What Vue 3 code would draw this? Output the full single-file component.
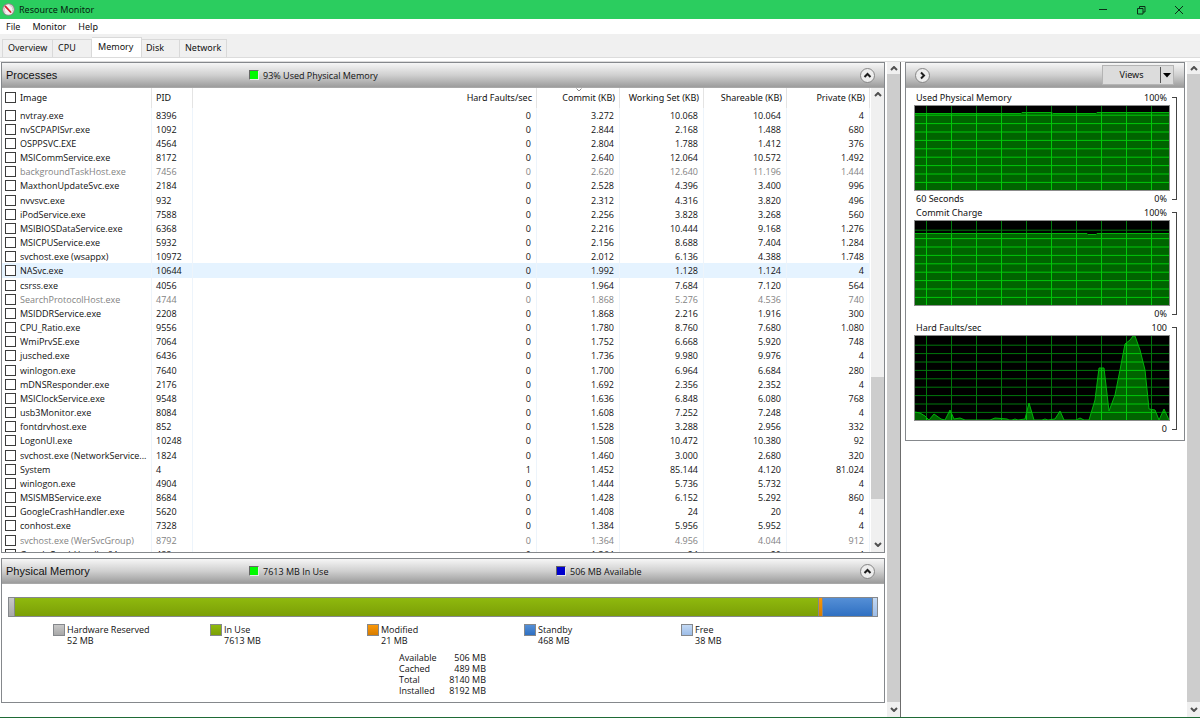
<script setup>
const tabs = ['Overview', 'CPU', 'Memory', 'Disk', 'Network']

const columns = ['Image', 'PID', 'Hard Faults/sec', 'Commit (KB)', 'Working Set (KB)', 'Shareable (KB)', 'Private (KB)']

const processes = [
  ['nvtray.exe', '8396', '0', '3.272', '10.068', '10.064', '4'],
  ['nvSCPAPISvr.exe', '1092', '0', '2.844', '2.168', '1.488', '680'],
  ['OSPPSVC.EXE', '4564', '0', '2.804', '1.788', '1.412', '376'],
  ['MSICommService.exe', '8172', '0', '2.640', '12.064', '10.572', '1.492'],
  ['backgroundTaskHost.exe', '7456', '0', '2.620', '12.640', '11.196', '1.444', 'idle'],
  ['MaxthonUpdateSvc.exe', '2184', '0', '2.528', '4.396', '3.400', '996'],
  ['nvvsvc.exe', '932', '0', '2.312', '4.316', '3.820', '496'],
  ['iPodService.exe', '7588', '0', '2.256', '3.828', '3.268', '560'],
  ['MSIBIOSDataService.exe', '6368', '0', '2.216', '10.444', '9.168', '1.276'],
  ['MSICPUService.exe', '5932', '0', '2.156', '8.688', '7.404', '1.284'],
  ['svchost.exe (wsappx)', '10972', '0', '2.012', '6.136', '4.388', '1.748'],
  ['NASvc.exe', '10644', '0', '1.992', '1.128', '1.124', '4', 'hover'],
  ['csrss.exe', '4056', '0', '1.964', '7.684', '7.120', '564'],
  ['SearchProtocolHost.exe', '4744', '0', '1.868', '5.276', '4.536', '740', 'idle'],
  ['MSIDDRService.exe', '2208', '0', '1.868', '2.216', '1.916', '300'],
  ['CPU_Ratio.exe', '9556', '0', '1.780', '8.760', '7.680', '1.080'],
  ['WmiPrvSE.exe', '7064', '0', '1.752', '6.668', '5.920', '748'],
  ['jusched.exe', '6436', '0', '1.736', '9.980', '9.976', '4'],
  ['winlogon.exe', '7640', '0', '1.700', '6.964', '6.684', '280'],
  ['mDNSResponder.exe', '2176', '0', '1.692', '2.356', '2.352', '4'],
  ['MSIClockService.exe', '9548', '0', '1.636', '6.848', '6.080', '768'],
  ['usb3Monitor.exe', '8084', '0', '1.608', '7.252', '7.248', '4'],
  ['fontdrvhost.exe', '852', '0', '1.528', '3.288', '2.956', '332'],
  ['LogonUI.exe', '10248', '0', '1.508', '10.472', '10.380', '92'],
  ['svchost.exe (NetworkService...', '1824', '0', '1.460', '3.000', '2.680', '320'],
  ['System', '4', '1', '1.452', '85.144', '4.120', '81.024'],
  ['winlogon.exe', '4904', '0', '1.444', '5.736', '5.732', '4'],
  ['MSISMBService.exe', '8684', '0', '1.428', '6.152', '5.292', '860'],
  ['GoogleCrashHandler.exe', '5620', '0', '1.408', '24', '20', '4'],
  ['conhost.exe', '7328', '0', '1.384', '5.956', '5.952', '4'],
  ['svchost.exe (WerSvcGroup)', '8792', '0', '1.364', '4.956', '4.044', '912', 'idle'],
  ['GoogleCrashHandler64.exe', '488', '0', '1.364', '24', '20', '4'],
].map((r) => ({ cells: r.slice(0, 7), state: r[7] || '' }))

const memory = [
  { name: 'Hardware Reserved', mb: 52, kind: 'reserved' },
  { name: 'In Use', mb: 7613, kind: 'in-use' },
  { name: 'Modified', mb: 21, kind: 'modified' },
  { name: 'Standby', mb: 468, kind: 'standby' },
  { name: 'Free', mb: 38, kind: 'free' },
]

const totals = [['Available', 506], ['Cached', 489], ['Total', 8140], ['Installed', 8192]]

const gridX = Array.from({ length: 10 }, (_, i) => 11.5 + i * 25)
const gridY = Array.from({ length: 9 }, (_, i) => 9.2 + i * 8.4)

const graphs = [
  {
    id: 'used', title: 'Used Physical Memory', max: '100%', min: '0%', span: '60 Seconds',
    points: '0,7.5 106,7.5 107,6.5 137,6.5 138,7.5 181,7.5 182,6.5 254,6.5',
  },
  {
    id: 'commit', title: 'Commit Charge', max: '100%', min: '0%', span: '',
    points: '0,12.5 172,12.5 173,13.5 181,13.5 182,12.5 254,12.5',
  },
  {
    id: 'faults', title: 'Hard Faults/sec', max: '100', min: '0', span: '',
    points: '0,76 5,77 10,80 14,84 19,78 26,83 30,84 35,74 39,83 45,82 50,84 75,84 80,82 92,83 94,84 97,84 100,83 103,84 110,83 114,67 119,84 127,84 130,83 133,84 140,83 145,75 149,84 161,84 165,82 169,84 174,84 180,64 184,32 189,32 194,75 200,59 205,34 210,8 215,4 218,0 220,0 225,14 230,34 234,73 240,74 244,84 249,73 254,84',
  },
]
</script>

<template>
  <div class="window">
    <header class="titlebar">
      <svg class="logo" viewBox="0 0 13 13" aria-hidden="true">
        <circle cx="6.5" cy="6.5" r="6.2" fill="#8f8a8c" />
        <circle cx="6.5" cy="6.5" r="5.2" fill="#f6f1f1" />
        <path d="M3.400 9.600A4.400 4.400 0 0 1 2.800 4.400M7.500 2.300A4.300 4.300 0 0 1 10.400 8.400" fill="none" stroke="#cfc6c6" />
        <path d="M3.400 3.400L8.600 9" stroke="#d3222c" stroke-width="1.8" stroke-linecap="round" />
      </svg>
      <h1>Resource Monitor</h1>
      <div class="controls">
        <button aria-label="Minimize"><svg viewBox="0 0 10 10"><path d="M1 4.500h8" /></svg></button>
        <button aria-label="Restore"><svg viewBox="0 0 10 10"><path d="M1.5 3.5h5.500v5.500h-5.500zM3.500 3.500v-2h5.500v5.500h-2" /></svg></button>
        <button aria-label="Close"><svg viewBox="0 0 10 10"><path d="M1 1l8 8M9 1l-8 8" /></svg></button>
      </div>
    </header>

    <nav class="menu">
      <button>File</button>
      <button>Monitor</button>
      <button>Help</button>
    </nav>

    <div class="tabs" role="tablist">
      <button v-for="t in tabs" :key="t" role="tab" :class="['tab', t.toLowerCase()]" :aria-selected="t === 'Memory'">{{ t }}</button>
    </div>
    <div class="tab-edge"></div>

    <div class="body">
      <main class="left">
        <section class="panel processes">
          <div class="panel-head">
            <h2>Processes</h2>
            <p class="stat"><i class="lamp green"></i>93% Used Physical Memory</p>
            <button class="round" aria-label="Collapse processes"><svg viewBox="0 0 15 15"><circle cx="7.5" cy="7.5" r="7" /><path d="M4.500 9l3-3 3 3" /></svg></button>
          </div>
          <div class="list">
            <div class="table-wrap">
              <table>
                <colgroup>
                  <col class="c-image"><col class="c-pid"><col><col class="c-num"><col class="c-num"><col class="c-num"><col class="c-num">
                </colgroup>
                <thead>
                  <tr>
                    <th v-for="(c, i) in columns" :key="c" scope="col">
                      <label v-if="i === 0"><input type="checkbox">{{ c }}</label>
                      <template v-else>{{ c }}</template>
                      <svg v-if="i === 3" class="sort" viewBox="0 0 6 4"><path d="M.5 .5l2.500 2.500 2.500-2.500" /></svg>
                    </th>
                  </tr>
                </thead>
                <tbody>
                  <tr v-for="p in processes" :key="p.cells[1]" :class="p.state">
                    <td v-for="(c, i) in p.cells" :key="i">
                      <label v-if="i === 0"><input type="checkbox">{{ c }}</label>
                      <template v-else>{{ c }}</template>
                    </td>
                  </tr>
                </tbody>
              </table>
            </div>
            <div class="scroll inner">
              <svg viewBox="0 0 8 5"><path d="M1 4l3-3 3 3" /></svg>
              <div class="track"><div class="before"></div><div class="thumb"></div><div class="after"></div></div>
              <svg viewBox="0 0 8 5"><path d="M1 1l3 3 3-3" /></svg>
            </div>
          </div>
        </section>

        <section class="panel physical">
          <div class="panel-head">
            <h2>Physical Memory</h2>
            <p class="stat"><i class="lamp green"></i>7613 MB In Use</p>
            <p class="stat"><i class="lamp blue"></i>506 MB Available</p>
            <button class="round" aria-label="Collapse physical memory"><svg viewBox="0 0 15 15"><circle cx="7.5" cy="7.5" r="7" /><path d="M4.500 9l3-3 3 3" /></svg></button>
          </div>
          <div class="bar">
            <div v-for="m in memory" :key="m.kind" :class="m.kind" :style="{ flexGrow: m.mb }"></div>
          </div>
          <ul class="legend">
            <li v-for="m in memory" :key="m.kind">
              <i :class="['swatch', m.kind]"></i>
              <span>{{ m.name }}<br>{{ m.mb }} MB</span>
            </li>
          </ul>
          <dl class="totals">
            <template v-for="t in totals" :key="t[0]">
              <dt>{{ t[0] }}</dt>
              <dd>{{ t[1] }} MB</dd>
            </template>
          </dl>
        </section>
      </main>

      <div class="scroll">
        <svg viewBox="0 0 8 5"><path d="M1 4l3-3 3 3" /></svg>
        <div class="track"><div class="thumb"></div></div>
        <svg viewBox="0 0 8 5"><path d="M1 1l3 3 3-3" /></svg>
      </div>

      <aside class="right">
        <section class="panel">
          <div class="panel-head views-head">
            <button class="round" aria-label="Hide graphs"><svg viewBox="0 0 15 15"><circle cx="7.5" cy="7.5" r="7" /><path d="M6 4.500l3 3-3 3" /></svg></button>
            <button class="views"><span>Views</span><svg viewBox="0 0 8 5"><path d="M0 0h8l-4 4.500z" /></svg></button>
          </div>
          <div class="graphs">
            <figure v-for="g in graphs" :key="g.id">
              <figcaption><span>{{ g.title }}</span><span>{{ g.max }}</span></figcaption>
              <svg class="plot" viewBox="0 0 254 84" preserveAspectRatio="none">
                <defs>
                  <clipPath :id="'area-' + g.id"><polygon :points="'0,84 ' + g.points + ' 254,84'" /></clipPath>
                </defs>
                <rect width="254" height="84" fill="#000" />
                <g stroke="#00780c">
                  <path v-for="x in gridX" :key="'x' + x" :d="`M${x} 0V84`" />
                  <path v-for="y in gridY" :key="'y' + y" :d="`M0 ${y}H254`" />
                </g>
                <g :clip-path="`url(#area-${g.id})`" stroke="#00c80a">
                  <rect width="254" height="84" fill="#006400" stroke="none" />
                  <path v-for="x in gridX" :key="'x' + x" :d="`M${x} 0V84`" />
                  <path v-for="y in gridY" :key="'y' + y" :d="`M0 ${y}H254`" />
                </g>
                <polyline :points="g.points" fill="none" stroke="#00b40a" />
              </svg>
              <div class="foot"><span>{{ g.span }}</span><span>{{ g.min }}</span></div>
              <div class="bracket"></div>
            </figure>
          </div>
        </section>
      </aside>

      <div class="scroll">
        <svg viewBox="0 0 8 5"><path d="M1 4l3-3 3 3" /></svg>
        <div class="track"><div class="thumb"></div></div>
        <svg viewBox="0 0 8 5"><path d="M1 1l3 3 3-3" /></svg>
      </div>
    </div>
    <div class="edge"></div>
  </div>
</template>

<style>
html, body { margin: 0; background: #fff; }
</style>

<style scoped>
.window {
  height: 100vh;
  display: flex;
  flex-direction: column;
  overflow: hidden;
  background: #fff;
  color: #111;
  font: 9px/11px "Open Sans", "Noto Sans", sans-serif;
}
* { box-sizing: border-box; }
h1, h2, p, ul, dl, dd, figure { margin: 0; padding: 0; }
button {
  margin: 0; padding: 0; border: 0; background: none;
  font: inherit; color: inherit;
}
i { display: block; }

.titlebar {
  height: 19px; flex: none;
  display: flex; align-items: center; gap: 4px;
  padding: 0 2px;
  background: #2bcd5f;
}
.logo { width: 13px; height: 13px; }
h1 { font: 400 9px/11px "Noto Sans", sans-serif; flex: 1; color: #06210f; }
.controls { display: flex; }
.controls button { width: 38px; height: 17px; display: grid; place-items: center; }
.controls svg { width: 10px; height: 10px; fill: none; stroke: #0b2f17; }

.menu { height: 15px; flex: none; display: flex; gap: 12px; padding-left: 6px; }
.menu, .tabs, th, .graphs, .views { font-family: "Noto Sans", sans-serif; }

.tabs {
  height: 23px; flex: none;
  display: flex; align-items: flex-end;
  padding-left: 2px;
  background: #f0f0f0;
}
.tab {
  height: 18px; padding: 0 0 2px 5px; text-align: left;
  border: 1px solid #d9d9d9; border-left: 0; border-bottom: 0;
}
.overview { width: 51px; border-left: 1px solid #d9d9d9; }
.cpu { width: 39px; }
.memory { width: 50px; height: 20px; padding-left: 6px; background: #fff; }
.disk { width: 38px; padding-left: 4px; }
.network { width: 47px; }
.tab-edge { height: 5px; flex: none; border: solid #dcdcdc; border-width: 1px 0; background: #fff; }

.body { flex: 1; min-height: 0; display: flex; }
.left {
  flex: 1; min-width: 0;
  display: flex; flex-direction: column; gap: 5px;
  padding: 0 2px 14px 1px;
}
.panel { border: 1px solid #85888c; background: #fff; }
.panel-head {
  height: 25px; flex: none;
  display: flex; align-items: center;
  padding: 0 9px 0 4px;
  background: linear-gradient(#f6f6f6, #d0d0d0 50%, #9c9c9c);
  border-bottom: 1px solid #a8a8a8;
}
h2 { width: 243px; flex: none; font: 400 11px/14px "Liberation Sans", Arial, sans-serif; }
.stat { width: 307px; flex: none; display: flex; align-items: center; gap: 4px; }
.lamp { width: 10px; height: 10px; border: 1px solid #666; border-right-color: #e8e8e8; border-bottom-color: #e8e8e8; }
.green { background: #00fa00; }
.blue { background: #0000cd; }
.round { width: 15px; height: 15px; flex: none; margin-left: auto; }
.physical .stat + .stat { width: auto; }
.round svg { display: block; width: 15px; height: 15px; }
.round circle { fill: #ededed; stroke: #858585; }
.round path { fill: none; stroke: #1d1d1d; stroke-width: 2; }

.processes { flex: 1; min-height: 0; display: flex; flex-direction: column; }
.list { flex: 1; min-height: 0; display: flex; }
.table-wrap { flex: 1; min-width: 0; overflow: hidden; }
table { width: 100%; table-layout: fixed; border-collapse: separate; border-spacing: 0; }
.c-image { width: 150px; }
.c-pid { width: 41px; }
.c-num { width: 83px; }
.c-num:nth-child(5) { width: 84px; }
th, td {
  padding: 0 5px 0 0; font-weight: 400; text-align: right;
  white-space: nowrap; overflow: hidden;
  border-right: 1px solid #edf4fb;
}
th { position: relative; height: 20px; padding: 0 4px 2px 0; border-right-color: #e4e4e4; }
td { height: 14px; }
tr:nth-child(6n) td { height: 15px; }
th:nth-child(-n+2), td:nth-child(-n+2) { text-align: left; padding-right: 0; padding-left: 4px; }
th:nth-child(1), td:nth-child(1) { padding-left: 3px; }
label { display: flex; align-items: center; gap: 4px; height: 14px; }
input {
  appearance: none; width: 11px; height: 11px; flex: none; margin: 0;
  border: 1px solid #3c3c3c; background: #fff;
}
.idle { color: #838383; }
.hover { background: #e5f3ff; }
.sort { position: absolute; top: 0; left: 39px; width: 6px; height: 4px; fill: none; stroke: #8a8a8a; }

.scroll {
  width: 13px; flex: none;
  display: flex; flex-direction: column; align-items: center;
  padding-top: 4px;
  background: #f0f0f0;
}
.inner { margin-left: 1px; }
.scroll svg { width: 8px; height: 5px; margin: 0 0 3px; fill: none; stroke: #505050; stroke-width: 2; }
.scroll svg:last-child { margin: 5px 0; }
.track { flex: 1; width: 100%; display: flex; flex-direction: column; }
.thumb { flex: 1; background: #cdcdcd; }
.before { flex: 277; }
.inner .thumb { flex: 122; }
.after { flex: 38; }

.bar {
  height: 20px; display: flex;
  margin: 13px 6px 7px;
  border: 1px solid #85888c;
}
.bar div { flex-basis: 0; }
.bar div + div { border-left: 1px solid #85888c; }
.reserved { background: linear-gradient(#c8c8c8, #a8a8a8); }
.in-use { background: linear-gradient(#8fb90e, #7b9f06); }
.modified { background: linear-gradient(#fb9808, #d67c00); }
.standby { background: linear-gradient(#558fd6, #2f70c2); }
.free { background: linear-gradient(#c3d9f4, #9dbde8); }
.legend { display: grid; grid-template-columns: repeat(5, 157px); margin-left: 51px; list-style: none; }
.legend li { display: flex; gap: 2px; }
.swatch { width: 12px; height: 12px; border: 1px solid #85888c; }
.totals {
  display: grid; grid-template-columns: 45px 42px;
  margin: 6px 0 6px 397px;
}
dd { text-align: right; }

.right { width: 287px; flex: none; border-left: 1px solid #6c6c6c; padding: 0 2px 0 4px; }
.views-head { padding: 0 10px 0 9px; justify-content: space-between; }
.views-head .round { margin: 0; }
.views {
  width: 72px; height: 20px;
  display: flex; align-items: center;
  background: #dcdcdc; border: 1px solid #b4b4b4;
}
.views span { flex: 1; border-right: 1px solid #555; line-height: 16px; }
.views svg { width: 8px; height: 5px; margin: 0 2px; }
.graphs { padding: 3px 7px 4px 8px; }
figure { display: grid; grid-template: 14px 86px 15px / 1fr 7px; }
figcaption, .foot { display: flex; justify-content: space-between; padding: 0 3px 0 2px; grid-column: 1; }
figcaption { line-height: 14px; }
.foot { line-height: 15px; }
.plot { display: block; width: 100%; height: 86px; border: 1px solid #8c8c8c; grid-column: 1; }
.bracket {
  grid-column: 2; grid-row: 1 / 4;
  margin: 6px 0 6px 2px;
  border: solid #444; border-width: 1px 1px 1px 0;
}
.edge { height: 1px; flex: none; background: #1f6b36; }
</style>
